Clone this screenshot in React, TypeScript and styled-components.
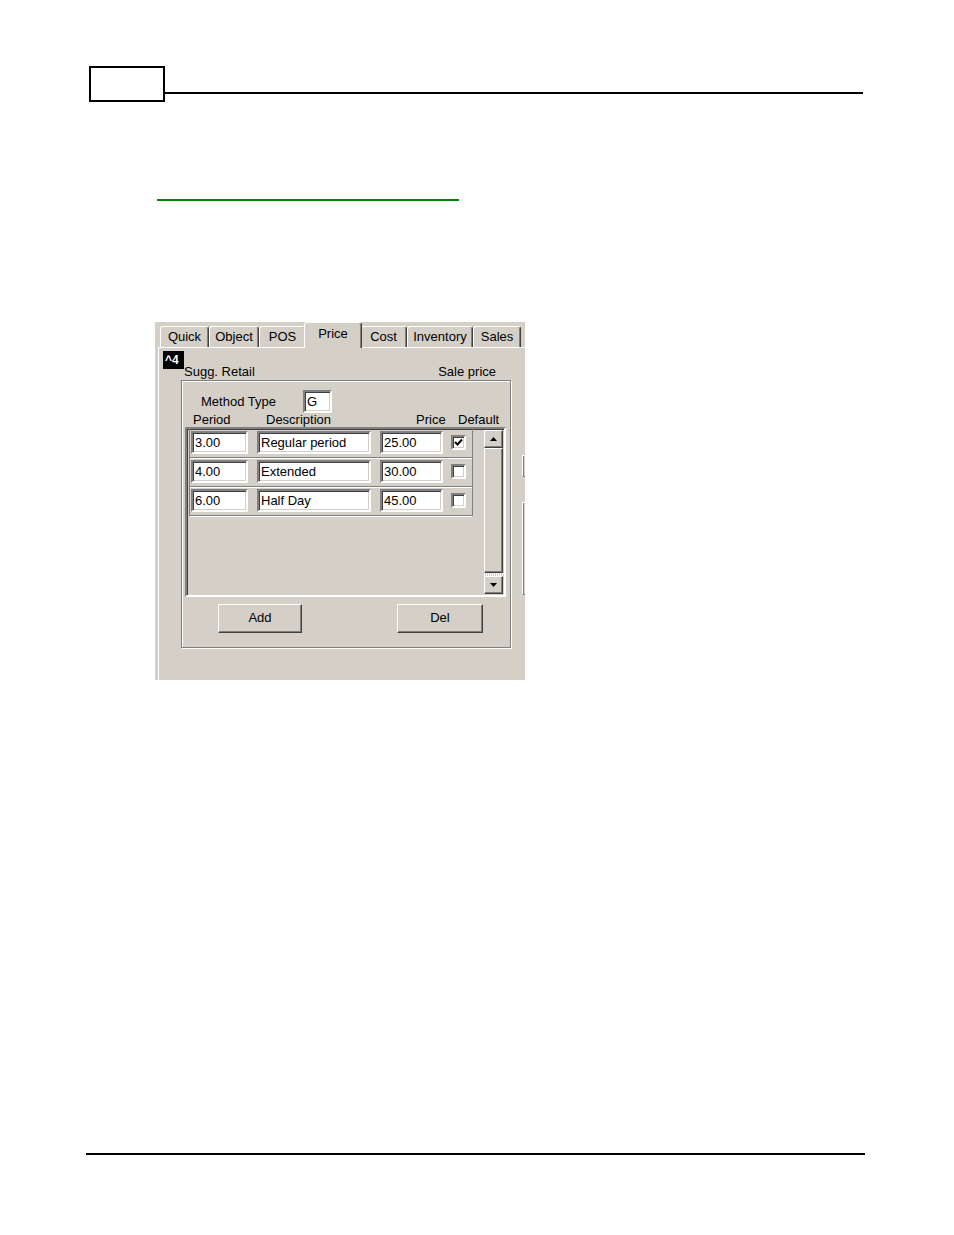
import styled, { createGlobalStyle } from 'styled-components'

const GlobalStyle = createGlobalStyle`
  html, body {
    margin: 0;
    padding: 0;
    background: #ffffff;
  }
  *, *::before, *::after {
    box-sizing: border-box;
  }
  body {
    font-family: 'Liberation Sans', Arial, sans-serif;
  }
`

// Document page chrome
const Page = styled.div`
  width: 954px;
  min-height: 1235px;
  padding-top: 66px;
  background: #ffffff;
  overflow: hidden;
`

const HeaderRow = styled.div`
  display: flex;
  align-items: flex-end;
  margin-left: 89px;
  width: 774px;
`

const PageNumberBox = styled.div`
  width: 76px;
  height: 36px;
  border: 2px solid #000;
  flex-shrink: 0;
`

const HeaderRule = styled.div`
  flex: 1;
  height: 2px;
  background: #000;
  margin-bottom: 8px;
`

const LinkRule = styled.div`
  margin: 97px 0 0 157px;
  width: 302px;
  height: 2px;
  background: #008000;
`

const FooterRule = styled.div`
  margin: 473px 0 0 86px;
  width: 779px;
  height: 2px;
  background: #000;
`

// Windows dialog screenshot
const Shot = styled.div`
  margin: 121px 0 0 155px;
  width: 370px;
  height: 358px;
  background: #d4d0c8;
  overflow: hidden;
  display: flex;
  flex-direction: column;
  font-family: 'Liberation Sans', Arial, sans-serif;
  font-size: 13px;
  color: #000;
`

const TabStrip = styled.div`
  display: flex;
  align-items: flex-end;
  height: 25px;
  padding-left: 5px;
  position: relative;
  z-index: 1;
`

const Tab = styled.div<{ $w: number; $active?: boolean }>`
  width: ${p => (p.$active ? p.$w + 4 : p.$w)}px;
  height: ${p => (p.$active ? 26 : 21)}px;
  margin: ${p => (p.$active ? '0 -2px -1px' : '0')};
  padding-top: ${p => (p.$active ? 1 : 0)}px;
  background: #d4d0c8;
  border-top: 1px solid #ffffff;
  border-left: 1px solid #ffffff;
  border-right: 1px solid #404040;
  border-radius: 3px 3px 0 0;
  box-shadow: inset -1px 0 0 #808080;
  text-align: center;
  line-height: 19px;
  white-space: nowrap;
  position: relative;
  z-index: ${p => (p.$active ? 2 : 1)};
`

const Panel = styled.div`
  flex: 1;
  margin-left: 3px;
  display: flex;
  border-top: 1px solid #ffffff;
  border-left: 1px solid #ffffff;
`

const PanelMain = styled.div`
  width: 354px;
  flex-shrink: 0;
  padding: 3px 0 0 4px;
`

const PanelSide = styled.div`
  flex: 1;
  display: flex;
  flex-direction: column;
  padding-left: 9px;
`

const SideStub = styled.div<{ $top: number; $h: number }>`
  margin-top: ${p => p.$top}px;
  height: ${p => p.$h}px;
  border-left: 1px solid #ffffff;
  border-top: 1px solid #ffffff;
  border-bottom: 1px solid #808080;
  box-shadow: inset 1px 0 0 #808080;
`

const TopRow = styled.div`
  display: flex;
  align-items: flex-end;
  height: 29px;
  padding-right: 17px;
`

const Badge = styled.div`
  align-self: flex-start;
  width: 21px;
  height: 18px;
  background: #000;
  color: #fff;
  font-weight: bold;
  font-size: 12px;
  line-height: 18px;
  padding-left: 2px;
  flex-shrink: 0;
`

const CaptionRow = styled.div`
  flex: 1;
  display: flex;
  justify-content: space-between;
  line-height: 15px;
  margin-bottom: 1px;
`

const GroupBox = styled.div`
  margin-left: 18px;
  width: 330px;
  height: 268px;
  padding-top: 9px;
  border: 1px solid #808080;
  box-shadow: inset 1px 1px 0 #ffffff, 1px 1px 0 #ffffff;
`

const MethodRow = styled.div`
  display: flex;
  align-items: center;
  height: 23px;
  padding-left: 19px;
`

const MethodLabel = styled.span`
  width: 102px;
`

const Field = styled.div<{ $w: number }>`
  width: ${p => p.$w}px;
  height: 23px;
  flex-shrink: 0;
  background: #ffffff;
  border: 2px solid;
  border-color: #808080 #ffffff #ffffff #808080;
  box-shadow: inset 1px 1px 0 #404040, inset -1px -1px 0 #d4d0c8;
  padding: 0 0 0 2px;
  line-height: 19px;
  white-space: nowrap;
  overflow: hidden;
`

const ColumnHeads = styled.div`
  display: flex;
  height: 14px;
  line-height: 14px;
  padding-left: 11px;
`

const Head = styled.span<{ $w?: number }>`
  width: ${p => (p.$w ? `${p.$w}px` : 'auto')};
`

const GridBox = styled.div`
  margin-left: 3px;
  width: 321px;
  height: 170px;
  display: flex;
  align-items: flex-start;
  border: 2px solid;
  border-color: #808080 #ffffff #ffffff #808080;
  box-shadow: inset 1px 1px 0 #404040, inset -1px -1px 0 #d4d0c8;
`

const Rows = styled.div`
  margin-left: 2px;
  width: 284px;
  border-left: 1px solid #808080;
  border-right: 1px solid #808080;
`

const Row = styled.div`
  display: flex;
  align-items: flex-start;
  height: 29px;
  padding: 2px 0 0 1px;
  gap: 9px;
  border-bottom: 1px solid #808080;
  box-shadow: 0 1px 0 #ffffff;
`

const CheckBox = styled.div`
  width: 15px;
  height: 15px;
  margin: 4px 0 0 -1px;
  background: #ffffff;
  border: 2px solid;
  border-color: #808080 #ffffff #ffffff #808080;
  box-shadow: inset 1px 1px 0 #404040, inset -1px -1px 0 #d4d0c8;
  display: flex;
  align-items: center;
  justify-content: center;
`

const ScrollBar = styled.div`
  margin: 1px 0 0 11px;
  width: 19px;
  height: 164px;
  display: flex;
  flex-direction: column;
`

const Raised = styled.div`
  background: #d4d0c8;
  border: 1px solid;
  border-color: #ffffff #404040 #404040 #ffffff;
  box-shadow: inset -1px -1px 0 #808080, inset 1px 1px 0 #d4d0c8;
`

const ArrowButton = styled(Raised)`
  height: 18px;
  display: flex;
  align-items: center;
  justify-content: center;
  flex-shrink: 0;
`

const Thumb = styled(Raised)`
  flex: 1;
`

const TrackGap = styled.div`
  height: 3px;
  background-image: repeating-linear-gradient(90deg, #ffffff 0 1px, #d4d0c8 1px 2px);
`

const ButtonRow = styled.div`
  display: flex;
  margin-top: 7px;
`

const PushButton = styled(Raised)<{ $w: number; $left: number }>`
  width: ${p => p.$w}px;
  height: 29px;
  margin-left: ${p => p.$left}px;
  text-align: center;
  line-height: 26px;
`

const rows = [
  { period: '3.00', desc: 'Regular period', price: '25.00', def: true },
  { period: '4.00', desc: 'Extended', price: '30.00', def: false },
  { period: '6.00', desc: 'Half Day', price: '45.00', def: false },
]

const tabs = [
  { label: 'Quick', w: 49 },
  { label: 'Object', w: 50 },
  { label: 'POS', w: 47 },
  { label: 'Price', w: 54, active: true },
  { label: 'Cost', w: 47 },
  { label: 'Inventory', w: 66 },
  { label: 'Sales', w: 48 },
]

function Arrow({ up }: { up?: boolean }) {
  return (
    <svg width="7" height="4" viewBox="0 0 7 4">
      <path d={up ? 'M3.5 0 L7 4 L0 4 Z' : 'M0 0 L7 0 L3.5 4 Z'} fill="#000" />
    </svg>
  )
}

function Check() {
  return (
    <svg width="9" height="9" viewBox="0 0 9 9">
      <path d="M1 4 L3.5 6.5 L8 1.5" stroke="#000" strokeWidth="2" fill="none" />
    </svg>
  )
}

function App() {
  return (
    <Page>
      <GlobalStyle />
      <HeaderRow>
        <PageNumberBox />
        <HeaderRule />
      </HeaderRow>
      <LinkRule />

      <Shot>
        <TabStrip>
          {tabs.map(t => (
            <Tab key={t.label} $w={t.w} $active={t.active}>
              {t.label}
            </Tab>
          ))}
        </TabStrip>
        <Panel>
          <PanelMain>
            <TopRow>
              <Badge>^4</Badge>
              <CaptionRow>
                <span>Sugg. Retail</span>
                <span>Sale price</span>
              </CaptionRow>
            </TopRow>
            <GroupBox>
              <MethodRow>
                <MethodLabel>Method Type</MethodLabel>
                <Field $w={29}>G</Field>
              </MethodRow>
              <ColumnHeads>
                <Head $w={73}>Period</Head>
                <Head $w={150}>Description</Head>
                <Head $w={42}>Price</Head>
                <Head>Default</Head>
              </ColumnHeads>
              <GridBox>
                <Rows>
                  {rows.map(r => (
                    <Row key={r.period}>
                      <Field $w={57}>{r.period}</Field>
                      <Field $w={114}>{r.desc}</Field>
                      <Field $w={63}>{r.price}</Field>
                      <CheckBox>{r.def && <Check />}</CheckBox>
                    </Row>
                  ))}
                </Rows>
                <ScrollBar>
                  <ArrowButton>
                    <Arrow up />
                  </ArrowButton>
                  <Thumb />
                  <TrackGap />
                  <ArrowButton>
                    <Arrow />
                  </ArrowButton>
                </ScrollBar>
              </GridBox>
              <ButtonRow>
                <PushButton $w={84} $left={36}>Add</PushButton>
                <PushButton $w={86} $left={95}>Del</PushButton>
              </ButtonRow>
            </GroupBox>
          </PanelMain>
          <PanelSide>
            <SideStub $top={107} $h={22} />
            <SideStub $top={25} $h={93} />
          </PanelSide>
        </Panel>
      </Shot>

      <FooterRule />
    </Page>
  )
}

export default App
